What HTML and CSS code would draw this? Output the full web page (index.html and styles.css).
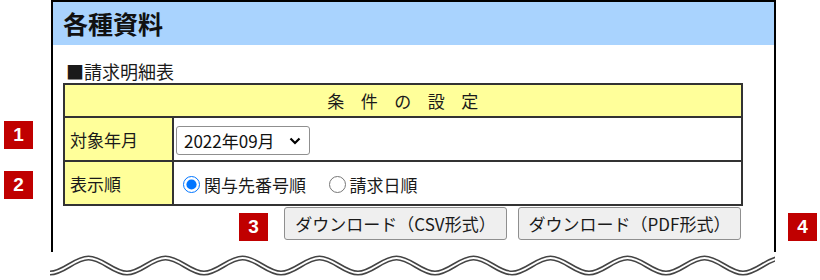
FILE: index.html
```html
<!DOCTYPE html>
<html>
  <head>
    <title>各種資料</title>
    <link rel="stylesheet" href="styles.css">
  </head>
  <body>
    <div class="frame">
      <div class="page-title">各種資料</div>
      <div class="section-title">■請求明細表</div>
      <table class="cond-table">
        <tr>
          <th colspan="2" class="cond-head">条件の設定</th>
        </tr>
        <tr class="row-month">
          <td class="label">対象年月</td>
          <td class="value">
            <div class="select">
              <span>2022年09月</span>
              <svg width="12" height="8" viewBox="0 0 12 8">
                <path d="M1.5 1.5 L6 6 L10.5 1.5" fill="none" stroke="#000" stroke-width="2.2" />
              </svg>
            </div>
          </td>
        </tr>
        <tr class="row-order">
          <td class="label">表示順</td>
          <td class="value">
            <label class="radio"><input type="radio" name="order" checked>関与先番号順</label>
            <label class="radio"><input type="radio" name="order">請求日順</label>
          </td>
        </tr>
      </table>
      <div class="buttons">
        <button>ダウンロード（CSV形式）</button>
        <button>ダウンロード（PDF形式）</button>
      </div>
    </div>

    <svg class="wave" width="725" height="28" viewBox="0 0 725 28">
      <path class="wave-outer" d="M0 21 C14 21 24.5 6 38.5 6 S63 21 77 21 S101.5 6 115.5 6 S140 21 154 21 S178.5 6 192.5 6 S217 21 231 21 S255.5 6 269.5 6 S294 21 308 21 S332.5 6 346.5 6 S371 21 385 21 S409.5 6 423.5 6 S448 21 462 21 S486.5 6 500.5 6 S525 21 539 21 S563.5 6 577.5 6 S602 21 616 21 S640.5 6 654.5 6 S679 21 693 21 S717.5 6 731.5 6" />
      <path class="wave-inner" d="M0 21 C14 21 24.5 6 38.5 6 S63 21 77 21 S101.5 6 115.5 6 S140 21 154 21 S178.5 6 192.5 6 S217 21 231 21 S255.5 6 269.5 6 S294 21 308 21 S332.5 6 346.5 6 S371 21 385 21 S409.5 6 423.5 6 S448 21 462 21 S486.5 6 500.5 6 S525 21 539 21 S563.5 6 577.5 6 S602 21 616 21 S640.5 6 654.5 6 S679 21 693 21 S717.5 6 731.5 6" />
    </svg>

    <div class="badge badge-1">1</div>
    <div class="badge badge-2">2</div>
    <div class="badge badge-3">3</div>
    <div class="badge badge-4">4</div>
  </body>
</html>
```

FILE: styles.css
```css
body {
  margin: 0;
  background-color: #fff;
  font-family: "Noto Sans CJK JP", "Noto Sans", sans-serif;
  color: #1a1a1a;
  position: relative;
  width: 820px;
  height: 280px;
  overflow: hidden;
}

.frame {
  margin-left: 51px;
  width: 721px;
  height: 250px;
  border: 2px solid #000;
  border-bottom: 0;
}

.page-title {
  height: 43px;
  background-color: #a9d3fe;
  padding-left: 10px;
  font-size: 25px;
  font-weight: bold;
  line-height: 43px;
  color: #111;
}

.section-title {
  margin-top: 15px;
  padding-left: 13px;
  font-size: 18px;
  line-height: 22px;
  height: 22px;
}

.cond-table {
  margin-left: 10px;
  margin-top: 1px;
  width: 680px;
  border-collapse: collapse;
  border: 2px solid #333;
}

.cond-table td,
.cond-table th {
  border: 2px solid #333;
  padding: 0;
}

.cond-head {
  background-color: #ffff9a;
  height: 31px;
  font-size: 17px;
  font-weight: normal;
  letter-spacing: 16.5px;
  padding-left: 16px !important;
  text-align: center;
}

.row-month td {
  height: 42px;
}

.row-order td {
  height: 42px;
}

.label {
  width: 102px;
  background-color: #ffff9a;
  padding-left: 5px !important;
  font-size: 17px;
}

.value {
  padding-left: 2px !important;
}

.select {
  display: inline-flex;
  align-items: center;
  justify-content: space-between;
  box-sizing: border-box;
  width: 134px;
  height: 29px;
  margin-top: 3px;
  padding: 0 8px 0 7px;
  border: 1px solid #8f8f8f;
  border-radius: 3px;
  font-size: 17px;
  color: #111;
  vertical-align: middle;
}

.radio {
  display: inline-flex;
  align-items: center;
  font-size: 17px;
  margin-right: 12px;
  vertical-align: middle;
}

.radio input {
  width: 17px;
  height: 17px;
  margin: 0 4px 0 7px;
}

.buttons {
  display: flex;
  justify-content: flex-end;
  gap: 11px;
  width: 688px;
  margin-top: 1px;
}

.buttons button {
  width: 223px;
  height: 33px;
  background-color: #efefef;
  border: 1px solid #8f8f8f;
  border-radius: 3px;
  font-family: "Noto Sans CJK JP", "Noto Sans", sans-serif;
  font-size: 17px;
  color: #1a1a1a;
  padding: 0;
}

.wave {
  display: block;
  margin-left: 50px;
}

.wave-outer {
  fill: none;
  stroke: #444;
  stroke-width: 5;
}

.wave-inner {
  fill: none;
  stroke: #fff;
  stroke-width: 2;
}

.badge {
  position: absolute;
  width: 29px;
  height: 28px;
  background-color: #c00000;
  color: #fff;
  font-family: "Liberation Sans", sans-serif;
  font-weight: bold;
  font-size: 19px;
  line-height: 28px;
  text-align: center;
}

.badge-1 {
  left: 4px;
  top: 121px;
}

.badge-2 {
  left: 4px;
  top: 171px;
}

.badge-3 {
  left: 239px;
  top: 213px;
}

.badge-4 {
  left: 788px;
  top: 213px;
}
```
